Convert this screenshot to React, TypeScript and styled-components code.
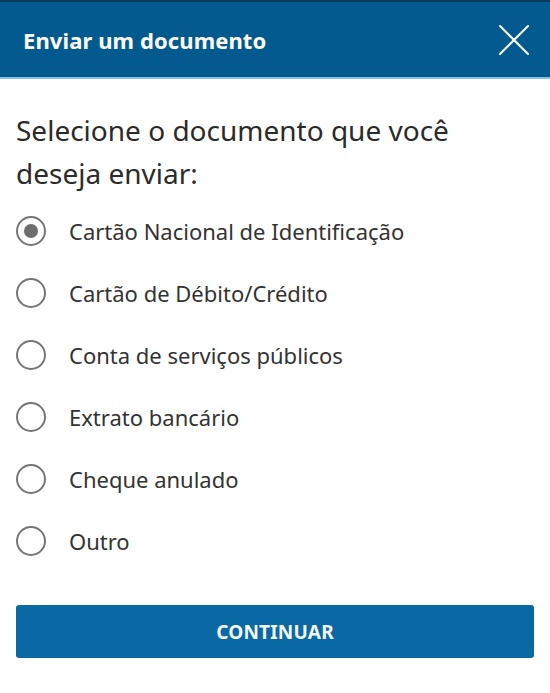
import React, { useState } from 'react';
import styled, { createGlobalStyle } from 'styled-components';

const GlobalStyle = createGlobalStyle`
  html, body {
    margin: 0;
    padding: 0;
    background: #ffffff;
    font-family: "Noto Sans", "Open Sans", sans-serif;
  }
`;

const Page = styled.div`
  width: 550px;
  min-height: 693px;
  background: #ffffff;
  display: flex;
  flex-direction: column;
`;

const Header = styled.header`
  height: 79px;
  background: #025a8e;
  border-top: 2px solid #0b3a5e;
  border-bottom: 2px solid #7fc4ea;
  display: flex;
  align-items: center;
  justify-content: space-between;
  padding: 0 20px 0 23px;
  box-sizing: border-box;
`;

const Title = styled.h1`
  margin: 0;
  color: #ffffff;
  font-size: 22px;
  font-weight: 700;
  letter-spacing: 0.1px;
`;

const CloseButton = styled.button`
  width: 32px;
  height: 32px;
  border: none;
  background: none;
  padding: 0;
  display: flex;
  align-items: center;
  justify-content: center;
  cursor: pointer;
`;

const Body = styled.main`
  padding: 30px 16px 0 16px;
  display: flex;
  flex-direction: column;
`;

const Question = styled.p`
  margin: 0 0 5px 0;
  max-width: 470px;
  font-size: 28px;
  line-height: 43px;
  color: #2b2b2b;
  font-weight: 400;
`;

const Options = styled.div`
  display: flex;
  flex-direction: column;
`;

const Option = styled.label`
  height: 62px;
  display: flex;
  align-items: center;
  gap: 23px;
  cursor: pointer;
`;

const Radio = styled.span<{ $checked: boolean }>`
  width: 30px;
  height: 30px;
  box-sizing: border-box;
  border-radius: 50%;
  border: 2.5px solid #767676;
  display: flex;
  align-items: center;
  justify-content: center;
  flex-shrink: 0;

  &::after {
    content: '';
    width: 14px;
    height: 14px;
    border-radius: 50%;
    background: #6d6d6d;
    display: ${p => (p.$checked ? 'block' : 'none')};
  }
`;

const OptionText = styled.span`
  font-size: 22px;
  color: #333333;
`;

const Continue = styled.button`
  margin-top: 33px;
  height: 53px;
  width: 100%;
  border: none;
  border-radius: 3px;
  background: #0a69a5;
  color: #f2f7fb;
  font-family: "Noto Sans", "Open Sans", sans-serif;
  font-size: 19px;
  font-weight: 700;
  letter-spacing: 0.2px;
  cursor: pointer;
`;

const options = [
  'Cartão Nacional de Identificação',
  'Cartão de Débito/Crédito',
  'Conta de serviços públicos',
  'Extrato bancário',
  'Cheque anulado',
  'Outro',
];

export default function App() {
  const [selected, setSelected] = useState(0);

  return (
    <Page>
      <GlobalStyle />
      <Header>
        <Title>Enviar um documento</Title>
        <CloseButton aria-label="Fechar">
          <svg width="30" height="30" viewBox="0 0 30 30">
            <path d="M1 1 L29 29 M29 1 L1 29" stroke="#ffffff" strokeWidth="2" strokeLinecap="round" />
          </svg>
        </CloseButton>
      </Header>
      <Body>
        <Question>Selecione o documento que você deseja enviar:</Question>
        <Options>
          {options.map((opt, i) => (
            <Option key={opt} onClick={() => setSelected(i)}>
              <Radio $checked={selected === i} />
              <OptionText>{opt}</OptionText>
            </Option>
          ))}
        </Options>
        <Continue>CONTINUAR</Continue>
      </Body>
    </Page>
  );
}
